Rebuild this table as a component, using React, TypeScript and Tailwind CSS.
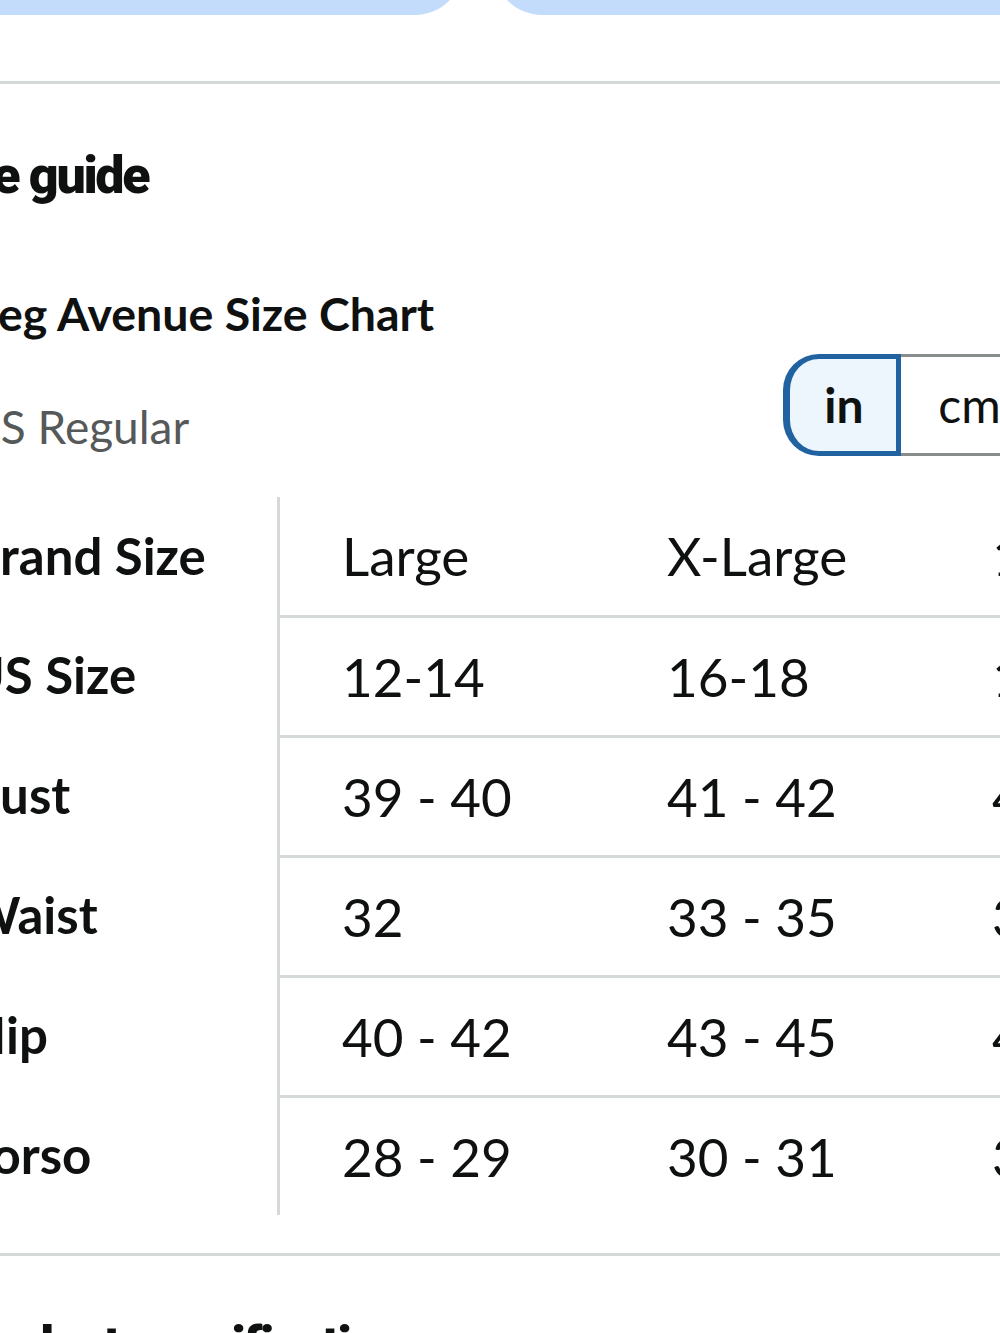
const rows = [
  { label: 'Brand Size', values: ['Large', 'X-Large', '1X'] },
  { label: 'US Size', values: ['12-14', '16-18', '18-20'] },
  { label: 'Bust', values: ['39 - 40', '41 - 42', '43 - 45'] },
  { label: 'Waist', values: ['32', '33 - 35', '36 - 38'] },
  { label: 'Hip', values: ['40 - 42', '43 - 45', '46 - 48'] },
  { label: 'Torso', values: ['28 - 29', '30 - 31', '32 - 33'] },
]

const body = { fontFamily: 'Lato, "Noto Sans", sans-serif' }
const display = { fontFamily: 'Roboto, Inter, sans-serif' }

export default function App() {
  return (
    <div className="h-[1333px] w-[1000px] overflow-hidden bg-white text-[#0f1111]">
      {/* tab buttons peeking from above */}
      <div className="-mt-[48px] flex h-[63px] gap-[31px]">
        <div className="-ml-[40px] w-[503px] shrink-0 rounded-br-[48px] bg-[#c3dcfb]" />
        <div className="flex-1 rounded-bl-[48px] bg-[#c3dcfb]" />
      </div>

      <div className="mt-[66px] border-t-[3px] border-[#d5d9d9]" />

      <div className="-ml-[25px] w-[1060px]">
        <h2
          style={display}
          className="-ml-[49px] mt-[66px] text-[52px] font-black leading-none tracking-[-0.045em]"
        >
          Size guide
        </h2>

        <h3 style={body} className="mt-[88px] text-[46.5px] font-bold leading-none">
          Leg Avenue Size Chart
        </h3>

        <div className="mt-[17px] flex items-end justify-between">
          <p style={body} className="-ml-[8px] mb-[6px] text-[46px] leading-none text-[#565959]">
            US Regular
          </p>
          <div style={body} className="-mr-[6px] flex h-[102px] text-[48px] leading-none">
            <div className="flex w-[118px] items-center justify-center rounded-l-[36px] border-[5px] border-l-[7px] border-[#2162a1] bg-[#edf5fd] pl-[2px] font-bold">
              in
            </div>
            <div className="flex w-[140px] items-center justify-center border-y-[3px] border-r-[3px] border-[#888c8c] bg-white">
              cm
            </div>
          </div>
        </div>

        <div style={body} className="mt-[41px]">
          {rows.map((row, i) => (
            <div key={row.label} className={`flex ${i === 0 ? 'h-[118px]' : 'h-[120px]'}`}>
              <div className="flex w-[305px] shrink-0 items-center border-r-[3px] border-[#d5d9d9] text-[51px] font-bold leading-none">
                <span className="-ml-[8px]">{row.label}</span>
              </div>
              <div className={`flex flex-1 ${i === 0 ? '' : 'border-t-[3px] border-[#d5d9d9]'}`}>
                {row.values.map(v => (
                  <div key={v} className="flex w-[325px] shrink-0 items-center pl-[62px] text-[53px] leading-none">
                    {v}
                  </div>
                ))}
              </div>
            </div>
          ))}
        </div>
      </div>

      <div className="mt-[38px] border-t-[3px] border-[#d5d9d9]" />

      <h2
        style={display}
        className="-ml-[50px] mt-[64px] text-[52px] font-black leading-none tracking-[-0.045em]"
      >
        Product specifications
      </h2>
    </div>
  )
}
